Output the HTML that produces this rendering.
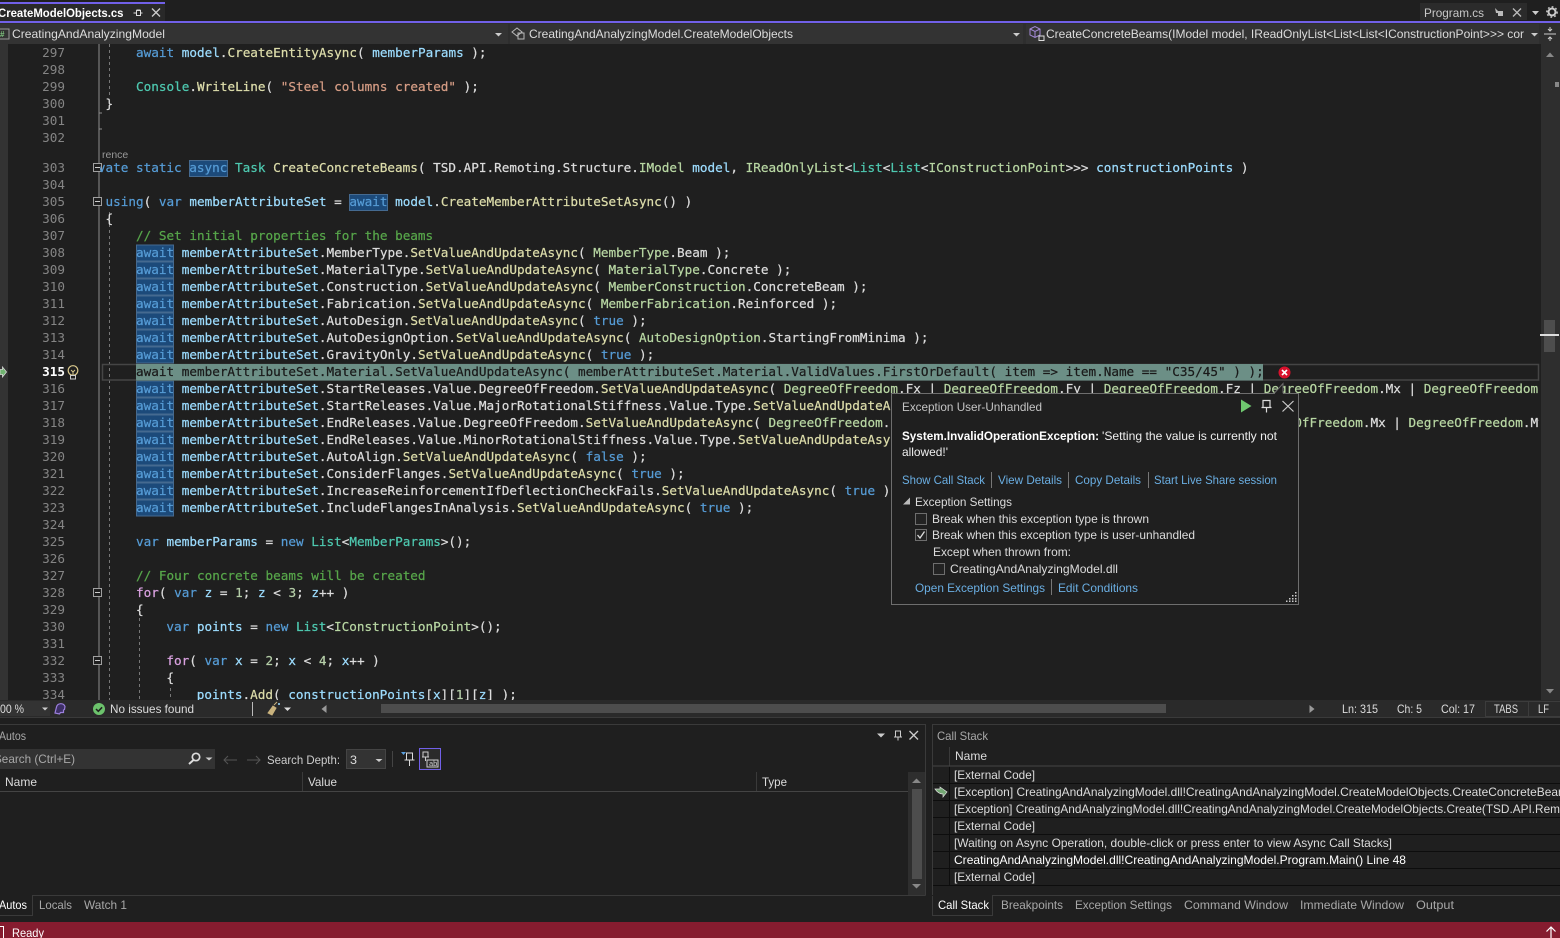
<!DOCTYPE html>
<html><head><meta charset="utf-8"><title>CreateModelObjects.cs</title>
<style>
html,body{margin:0;padding:0;background:#1f1f1f;width:1560px;height:938px;overflow:hidden}
svg{display:block;position:absolute;left:0;top:0}
text{white-space:pre}
.u{font:12px "Liberation Sans",sans-serif;fill:#dcdcdc}
.d{fill:#a8a8a8}.a{fill:#6aaee2}
.c{font:12.66px "DejaVu Sans Mono","Liberation Mono",monospace;fill:#dcdcdc;stroke:#dcdcdc;stroke-width:.22px}
.ln{font:12.66px "DejaVu Sans Mono","Liberation Mono",monospace;fill:#858585;text-anchor:end}
.k{fill:#569cd6;stroke:#569cd6}.v{fill:#9cdcfe;stroke:#9cdcfe}.m{fill:#dcdcaa;stroke:#dcdcaa}.t{fill:#4ec9b0;stroke:#4ec9b0}.i{fill:#b8d7a3;stroke:#b8d7a3}.s{fill:#d69d85;stroke:#d69d85}.n{fill:#b5cea8;stroke:#b5cea8}.g{fill:#57a64a;stroke:#57a64a}.f{fill:#d8a0df;stroke:#d8a0df}
</style></head><body>
<svg width="1560" height="938" viewBox="0 0 1560 938" xmlns="http://www.w3.org/2000/svg">
<defs>
<clipPath id="code"><rect x="100" y="44" width="1439" height="656"/></clipPath>
<clipPath id="cs"><rect x="950" y="766" width="610" height="120"/></clipPath>
</defs>
<rect width="1560" height="938" fill="#1f1f1f"/>

<!-- top tabs -->
<rect x="0" y="2" width="165" height="19" fill="#292929"/>
<rect x="0" y="2" width="165" height="2" fill="#7160e8"/>
<rect x="0" y="21" width="1560" height="2" fill="#7160e8"/>
<text class="u" x="-2" y="17" textLength="125.500" lengthAdjust="spacingAndGlyphs" font-weight="700" style="font-weight:700;fill:#fff">CreateModelObjects.cs</text>
<path d="M133.500 13h3M136.500 10.500v5h4v-5zM140.500 13h2M136.500 10h4" stroke="#ddd" fill="none"/>
<path d="M152 8.500l8 8M160 8.500l-8 8" stroke="#ccc" stroke-width="1.300"/>
<rect x="1420" y="3" width="107" height="17" fill="#2b2b2b"/>
<text class="u" x="1424" y="17" textLength="60" lengthAdjust="spacingAndGlyphs" style="fill:#c8c8c8">Program.cs</text>
<path d="M1495 8l3 3h5v5h-5v-3h-2z" fill="#bbb"/>
<path d="M1513 8.500l8 8M1521 8.500l-8 8" stroke="#bbb" stroke-width="1.300"/>
<path d="M1532 11h7l-3.500 4z" fill="#ccc"/>
<circle cx="1552" cy="12" r="3.500" fill="none" stroke="#ccc" stroke-width="2"/>
<circle cx="1552" cy="12" r="5.200" fill="none" stroke="#ccc" stroke-width="1.300" stroke-dasharray="1.800 2.200"/>

<!-- nav bar -->
<rect x="0" y="23" width="1560" height="21" fill="#2e2e2e"/>
<rect x="0" y="24" width="508" height="20" fill="#333"/>
<rect x="510" y="24" width="513" height="20" fill="#333"/>
<rect x="1026" y="24" width="513" height="20" fill="#333"/>
<rect x="-3" y="29" width="12" height="10" fill="none" stroke="#9a9a9a"/>
<text x="0" y="37" style="font:bold 8px 'Liberation Sans',sans-serif;fill:#7fc77f">#</text>
<text class="u" x="12" y="38" textLength="153" lengthAdjust="spacingAndGlyphs">CreatingAndAnalyzingModel</text>
<path d="M495 33h7l-3.500 3.500z" fill="#ccc"/>
<path d="M512 32l5-4 5 4-5 4zM518 33h6v6h-6z" fill="none" stroke="#bbb"/>
<text class="u" x="529" y="38" textLength="264" lengthAdjust="spacingAndGlyphs">CreatingAndAnalyzingModel.CreateModelObjects</text>
<path d="M1013 33h7l-3.500 3.500z" fill="#ccc"/>
<path d="M1030 29l5-2.500 5 2.500v6l-5 2.500-5-2.500zM1030 29l5 2.500 5-2.500M1035 31.500v6" fill="none" stroke="#a58bd8"/>
<rect x="1039" y="36" width="5" height="4.500" fill="none" stroke="#ddd"/>
<text class="u" x="1046" y="38" textLength="478" lengthAdjust="spacingAndGlyphs">CreateConcreteBeams(IModel model, IReadOnlyList&lt;List&lt;List&lt;IConstructionPoint&gt;&gt;&gt; cor</text>
<path d="M1531 33h7l-3.500 3.500z" fill="#ccc"/>
<path d="M1544 34h12M1550 27v4M1548 29l2 2 2-2M1550 41v-4M1548 39l2-2 2 2" fill="none" stroke="#ccc"/>

<!-- editor margins -->
<rect x="0" y="44" width="8" height="656" fill="#333"/>
<rect x="1541" y="44" width="19" height="656" fill="#2e2e2e"/>
<path d="M1546 57l4-4.500 4 4.500z" fill="#888"/>
<path d="M1546 689l4 4.500 4-4.500z" fill="#888"/>
<rect x="1555" y="82" width="4" height="5" fill="#888"/>
<rect x="1544" y="320" width="11" height="32" fill="#4d4d4d"/>
<rect x="1540" y="334" width="19" height="2" fill="#ddd"/>

<!-- line numbers -->
<g class="nums">
<text class="ln" x="65" y="57">297</text><text class="ln" x="65" y="74">298</text><text class="ln" x="65" y="91">299</text><text class="ln" x="65" y="108">300</text><text class="ln" x="65" y="125">301</text><text class="ln" x="65" y="142">302</text>
<text class="ln" x="65" y="172">303</text><text class="ln" x="65" y="189">304</text><text class="ln" x="65" y="206">305</text><text class="ln" x="65" y="223">306</text><text class="ln" x="65" y="240">307</text><text class="ln" x="65" y="257">308</text><text class="ln" x="65" y="274">309</text><text class="ln" x="65" y="291">310</text><text class="ln" x="65" y="308">311</text><text class="ln" x="65" y="325">312</text><text class="ln" x="65" y="342">313</text><text class="ln" x="65" y="359">314</text>
<text class="ln" x="65" y="376" style="fill:#fff;font-weight:700">315</text>
<text class="ln" x="65" y="393">316</text><text class="ln" x="65" y="410">317</text><text class="ln" x="65" y="427">318</text><text class="ln" x="65" y="444">319</text><text class="ln" x="65" y="461">320</text><text class="ln" x="65" y="478">321</text><text class="ln" x="65" y="495">322</text><text class="ln" x="65" y="512">323</text><text class="ln" x="65" y="529">324</text><text class="ln" x="65" y="546">325</text><text class="ln" x="65" y="563">326</text><text class="ln" x="65" y="580">327</text><text class="ln" x="65" y="597">328</text><text class="ln" x="65" y="614">329</text><text class="ln" x="65" y="631">330</text><text class="ln" x="65" y="648">331</text><text class="ln" x="65" y="665">332</text><text class="ln" x="65" y="682">333</text><text class="ln" x="65" y="699">334</text>
</g>
<rect x="0" y="700" width="100" height="6" fill="#2b2b2b"/>
<!-- current line arrow & bulb -->
<path d="M0 369.500h2.500v-2.500l4 5-4 5v-2.500h-2.500z" fill="#6fb36f" stroke="#d8d8d8" stroke-width=".8"/>
<circle cx="73" cy="370.500" r="4.800" fill="none" stroke="#d9c88c" stroke-width="1.200"/>
<path d="M71 370l2 2 2-2M73 372v3" fill="none" stroke="#d9c88c"/>
<rect x="70.500" y="375.500" width="5" height="3.500" fill="none" stroke="#ccc"/>

<!-- outline & guides -->
<path d="M99 44v656" stroke="#8c8c8c"/>
<path d="M99 113h3M99 129h3" stroke="#8c8c8c"/>
<path d="M109.500 44v52M109.500 212v488" stroke="#777" stroke-dasharray="3 3"/>
<path d="M139.500 606v94" stroke="#777" stroke-dasharray="3 3"/>
<path d="M170.500 688v12" stroke="#777" stroke-dasharray="3 3"/>
<g fill="#1f1f1f" stroke="#a0a0a0">
<rect x="93.500" y="163.500" width="8" height="8"/><rect x="93.500" y="197.500" width="8" height="8"/><rect x="93.500" y="588.500" width="8" height="8"/><rect x="93.500" y="656.500" width="8" height="8"/>
</g>
<path d="M95 167.500h5M95 201.500h5M95 592.500h5M95 660.500h5" stroke="#ccc"/>

<!-- highlights -->
<rect x="189.500" y="160.500" width="38" height="16" fill="#1c4a7a" stroke="#456a90"/>
<rect x="349.500" y="194.500" width="38" height="16" fill="#1c4a7a" stroke="#456a90"/>
<g fill="#1c4a7a" stroke="#456a90">
<rect x="136.500" y="245" width="37" height="16"/><rect x="136.500" y="262" width="37" height="16"/><rect x="136.500" y="279" width="37" height="16"/><rect x="136.500" y="296" width="37" height="16"/><rect x="136.500" y="313" width="37" height="16"/><rect x="136.500" y="330" width="37" height="16"/><rect x="136.500" y="347" width="37" height="16"/>
<rect x="136.500" y="381" width="37" height="16"/><rect x="136.500" y="398" width="37" height="16"/><rect x="136.500" y="415" width="37" height="16"/><rect x="136.500" y="432" width="37" height="16"/><rect x="136.500" y="449" width="37" height="16"/><rect x="136.500" y="466" width="37" height="16"/><rect x="136.500" y="483" width="37" height="16"/><rect x="136.500" y="500" width="37" height="16"/>
</g>
<rect x="102.500" y="364.500" width="1436" height="15.500" fill="none" stroke="#454545" stroke-width="1.500"/>
<rect x="136" y="364" width="1127" height="16.500" fill="#6c8f86"/>

<!-- code -->
<g clip-path="url(#code)">
<text class="c k" x="136" y="57">await <tspan class="v">model</tspan><tspan class="c">.</tspan><tspan class="m">CreateEntityAsync</tspan><tspan class="c">( </tspan><tspan class="v">memberParams</tspan><tspan class="c"> );</tspan></text>
<text class="c" x="136" y="91"><tspan class="t">Console</tspan>.<tspan class="m">WriteLine</tspan>( <tspan class="s">"Steel columns created"</tspan> );</text>
<text class="c" x="105.500" y="108">}</text>
<text x="102" y="158" style="font:10.500px 'Liberation Sans',sans-serif;fill:#999">rence</text>
<text class="c" x="75" y="172"><tspan class="k">private static async </tspan><tspan class="t">Task </tspan><tspan class="m">CreateConcreteBeams</tspan>( TSD.API.Remoting.Structure.<tspan class="i">IModel</tspan> <tspan class="v">model</tspan>, <tspan class="i">IReadOnlyList</tspan>&lt;<tspan class="t">List</tspan>&lt;<tspan class="t">List</tspan>&lt;<tspan class="i">IConstructionPoint</tspan>&gt;&gt;&gt; <tspan class="v">constructionPoints</tspan> )</text>
<text class="c" x="105.500" y="206"><tspan class="k">using</tspan>( <tspan class="k">var </tspan><tspan class="v">memberAttributeSet</tspan> = <tspan class="k">await</tspan> <tspan class="v">model</tspan>.<tspan class="m">CreateMemberAttributeSetAsync</tspan>() )</text>
<text class="c" x="105.500" y="223">{</text>
<text class="c g" x="136" y="240">// Set initial properties for the beams</text>
<text class="c" x="136" y="257"><tspan class="k">await</tspan> <tspan class="v">memberAttributeSet</tspan>.MemberType.<tspan class="m">SetValueAndUpdateAsync</tspan>( <tspan class="i">MemberType</tspan>.Beam );</text>
<text class="c" x="136" y="274"><tspan class="k">await</tspan> <tspan class="v">memberAttributeSet</tspan>.MaterialType.<tspan class="m">SetValueAndUpdateAsync</tspan>( <tspan class="i">MaterialType</tspan>.Concrete );</text>
<text class="c" x="136" y="291"><tspan class="k">await</tspan> <tspan class="v">memberAttributeSet</tspan>.Construction.<tspan class="m">SetValueAndUpdateAsync</tspan>( <tspan class="i">MemberConstruction</tspan>.ConcreteBeam );</text>
<text class="c" x="136" y="308"><tspan class="k">await</tspan> <tspan class="v">memberAttributeSet</tspan>.Fabrication.<tspan class="m">SetValueAndUpdateAsync</tspan>( <tspan class="i">MemberFabrication</tspan>.Reinforced );</text>
<text class="c" x="136" y="325"><tspan class="k">await</tspan> <tspan class="v">memberAttributeSet</tspan>.AutoDesign.<tspan class="m">SetValueAndUpdateAsync</tspan>( <tspan class="k">true</tspan> );</text>
<text class="c" x="136" y="342"><tspan class="k">await</tspan> <tspan class="v">memberAttributeSet</tspan>.AutoDesignOption.<tspan class="m">SetValueAndUpdateAsync</tspan>( <tspan class="i">AutoDesignOption</tspan>.StartingFromMinima );</text>
<text class="c" x="136" y="359"><tspan class="k">await</tspan> <tspan class="v">memberAttributeSet</tspan>.GravityOnly.<tspan class="m">SetValueAndUpdateAsync</tspan>( <tspan class="k">true</tspan> );</text>
<text class="c" x="136" y="376" style="fill:#1a1a1a;stroke:#1a1a1a">await memberAttributeSet.Material.SetValueAndUpdateAsync( memberAttributeSet.Material.ValidValues.FirstOrDefault( item =&gt; item.Name == "C35/45" ) );</text>
<text class="c" x="136" y="393"><tspan class="k">await</tspan> <tspan class="v">memberAttributeSet</tspan>.StartReleases.Value.DegreeOfFreedom.<tspan class="m">SetValueAndUpdateAsync</tspan>( <tspan class="i">DegreeOfFreedom</tspan>.Fx | <tspan class="i">DegreeOfFreedom</tspan>.Fy | <tspan class="i">DegreeOfFreedom</tspan>.Fz | <tspan class="i">DegreeOfFreedom</tspan>.Mx | <tspan class="i">DegreeOfFreedom</tspan>.My</text>
<text class="c" x="136" y="410"><tspan class="k">await</tspan> <tspan class="v">memberAttributeSet</tspan>.StartReleases.Value.MajorRotationalStiffness.Value.Type.<tspan class="m">SetValueAndUpdateAsync</tspan>(</text>
<text class="c" x="136" y="427"><tspan class="k">await</tspan> <tspan class="v">memberAttributeSet</tspan>.EndReleases.Value.DegreeOfFreedom.<tspan class="m">SetValueAndUpdateAsync</tspan>( <tspan class="i">DegreeOfFreedom</tspan>.Fx | <tspan class="i">DegreeOfFreedom</tspan>.Fy | <tspan class="i">DegreeOfFreedom</tspan>.Fz | <tspan class="i">DegreeOfFreedom</tspan>.Mx | <tspan class="i">DegreeOfFreedom</tspan>.My</text>
<text class="c" x="136" y="444"><tspan class="k">await</tspan> <tspan class="v">memberAttributeSet</tspan>.EndReleases.Value.MinorRotationalStiffness.Value.Type.<tspan class="m">SetValueAndUpdateAsync</tspan>(</text>
<text class="c" x="136" y="461"><tspan class="k">await</tspan> <tspan class="v">memberAttributeSet</tspan>.AutoAlign.<tspan class="m">SetValueAndUpdateAsync</tspan>( <tspan class="k">false</tspan> );</text>
<text class="c" x="136" y="478"><tspan class="k">await</tspan> <tspan class="v">memberAttributeSet</tspan>.ConsiderFlanges.<tspan class="m">SetValueAndUpdateAsync</tspan>( <tspan class="k">true</tspan> );</text>
<text class="c" x="136" y="495"><tspan class="k">await</tspan> <tspan class="v">memberAttributeSet</tspan>.IncreaseReinforcementIfDeflectionCheckFails.<tspan class="m">SetValueAndUpdateAsync</tspan>( <tspan class="k">true</tspan> );</text>
<text class="c" x="136" y="512"><tspan class="k">await</tspan> <tspan class="v">memberAttributeSet</tspan>.IncludeFlangesInAnalysis.<tspan class="m">SetValueAndUpdateAsync</tspan>( <tspan class="k">true</tspan> );</text>
<text class="c" x="136" y="546"><tspan class="k">var </tspan><tspan class="v">memberParams</tspan> = <tspan class="k">new </tspan><tspan class="t">List</tspan>&lt;<tspan class="t">MemberParams</tspan>&gt;();</text>
<text class="c g" x="136" y="580">// Four concrete beams will be created</text>
<text class="c" x="136" y="597"><tspan class="f">for</tspan>( <tspan class="k">var </tspan><tspan class="v">z</tspan> = <tspan class="n">1</tspan>; <tspan class="v">z</tspan> &lt; <tspan class="n">3</tspan>; <tspan class="v">z</tspan>++ )</text>
<text class="c" x="136" y="614">{</text>
<text class="c" x="166.400" y="631"><tspan class="k">var </tspan><tspan class="v">points</tspan> = <tspan class="k">new </tspan><tspan class="t">List</tspan>&lt;<tspan class="i">IConstructionPoint</tspan>&gt;();</text>
<text class="c" x="166.400" y="665"><tspan class="f">for</tspan>( <tspan class="k">var </tspan><tspan class="v">x</tspan> = <tspan class="n">2</tspan>; <tspan class="v">x</tspan> &lt; <tspan class="n">4</tspan>; <tspan class="v">x</tspan>++ )</text>
<text class="c" x="166.400" y="682">{</text>
<text class="c" x="196.800" y="699"><tspan class="v">points</tspan>.<tspan class="m">Add</tspan>( <tspan class="v">constructionPoints</tspan>[<tspan class="v">x</tspan>][<tspan class="n">1</tspan>][<tspan class="v">z</tspan>] );</text>
</g>

<!-- error glyph -->
<circle cx="1284.500" cy="372.500" r="6" fill="#d9112c"/>
<path d="M1282 370l5 5M1287 370l-5 5" stroke="#fff" stroke-width="1.600"/>

<!-- exception popup -->
<rect x="891.500" y="393.500" width="407" height="211" fill="#1f1f1f" stroke="#6e6e6e"/>
<path d="M1274 393.500l9-10v10" fill="#1f1f1f" stroke="#6e6e6e"/>
<path d="M1275 394h8" stroke="#1f1f1f" stroke-width="1.500"/>
<text class="u" x="902" y="411" textLength="140" lengthAdjust="spacingAndGlyphs" style="fill:#c4c4c4">Exception User-Unhandled</text>
<path d="M1241 399.500l10.500 6.500-10.500 6.500z" fill="#6fc76f"/>
<path d="M1263 400.500h7v7h-7zM1261.500 407.500h10M1266.500 408v4.500" fill="none" stroke="#ddd" stroke-width="1.200"/>
<path d="M1282.500 401l11 10.500M1293.500 401l-11 10.500" stroke="#ccc" stroke-width="1.200"/>
<text class="u" x="902" y="440" textLength="197" lengthAdjust="spacingAndGlyphs" style="font-weight:700;fill:#fff">System.InvalidOperationException:</text>
<text class="u" x="1102" y="440" textLength="175" lengthAdjust="spacingAndGlyphs" style="fill:#eee">'Setting the value is currently not</text>
<text class="u" x="902" y="456" textLength="46" lengthAdjust="spacingAndGlyphs" style="fill:#eee">allowed!'</text>
<text class="u a" x="902" y="484" textLength="83" lengthAdjust="spacingAndGlyphs">Show Call Stack</text>
<text class="u a" x="998" y="484" textLength="64" lengthAdjust="spacingAndGlyphs">View Details</text>
<text class="u a" x="1075" y="484" textLength="66" lengthAdjust="spacingAndGlyphs">Copy Details</text>
<text class="u a" x="1154" y="484" textLength="123" lengthAdjust="spacingAndGlyphs">Start Live Share session</text>
<path d="M991.500 472v16M1068.500 472v16M1148.500 472v16M1051.500 579v16" stroke="#777"/>
<path d="M910 497.500v7h-7z" fill="#bbb"/>
<text class="u" x="915" y="506" textLength="97" lengthAdjust="spacingAndGlyphs">Exception Settings</text>
<rect x="915.500" y="513.500" width="11" height="11" fill="#232323" stroke="#6e6e6e"/>
<text class="u" x="932" y="523" textLength="217" lengthAdjust="spacingAndGlyphs">Break when this exception type is thrown</text>
<rect x="915.500" y="529.500" width="11" height="11" fill="#232323" stroke="#6e6e6e"/>
<path d="M917.500 535l2.500 3 4.500-6.500" fill="none" stroke="#ddd" stroke-width="1.300"/>
<text class="u" x="932" y="539" textLength="263" lengthAdjust="spacingAndGlyphs">Break when this exception type is user-unhandled</text>
<text class="u" x="933" y="556" textLength="138" lengthAdjust="spacingAndGlyphs">Except when thrown from:</text>
<rect x="933.500" y="563.500" width="11" height="11" fill="#232323" stroke="#6e6e6e"/>
<text class="u" x="950" y="573" textLength="168" lengthAdjust="spacingAndGlyphs">CreatingAndAnalyzingModel.dll</text>
<text class="u a" x="915" y="592" textLength="130" lengthAdjust="spacingAndGlyphs">Open Exception Settings</text>
<text class="u a" x="1058" y="592" textLength="80" lengthAdjust="spacingAndGlyphs">Edit Conditions</text>
<path d="M1295 592h1.500v1.500h-1.500zM1292 595h1.500v1.500h-1.500zM1295 595h1.500v1.500h-1.500zM1289 598h1.500v1.500h-1.500zM1292 598h1.500v1.500h-1.500zM1295 598h1.500v1.500h-1.500zM1286 600.500h1.500v1.500h-1.500zM1289 600.500h1.500v1.500h-1.500zM1292 600.500h1.500v1.500h-1.500zM1295 600.500h1.500v1.500h-1.500z" fill="#ccc"/>

<!-- editor status row -->
<rect x="0" y="700" width="1560" height="17" fill="#2a2a2a"/>
<rect x="0" y="701" width="50" height="15" fill="#333"/>
<text class="u" x="0" y="713" textLength="24" lengthAdjust="spacingAndGlyphs">00 %</text>
<path d="M42 707.500h6l-3 3z" fill="#ccc"/>
<path d="M55 713l1.500-6a4.500 4.500 0 0 1 8.500-.5l-.5 3-1 .5v2.500h-3l-1 1.500z" fill="#3d2f66" stroke="#9b7fdc" stroke-width="1.200"/>
<circle cx="99" cy="709" r="6" fill="#6cc36c"/>
<path d="M96 709l2.300 2.300 3.800-4" fill="none" stroke="#1f1f1f" stroke-width="1.500"/>
<text class="u" x="110" y="713" textLength="84" lengthAdjust="spacingAndGlyphs">No issues found</text>
<path d="M252.500 702v14" stroke="#bbb"/>
<path d="M268 713l5-7 3 2-4 7zM274 705l3-3" fill="#c9b27d" stroke="#c9b27d"/>
<circle cx="279" cy="704" r="1" fill="#9cdcfe"/>
<path d="M284 707.500h7l-3.500 3.500z" fill="#ddd"/>
<path d="M326.500 705v8l-5-4z" fill="#999"/>
<rect x="381" y="704" width="785" height="9" fill="#4d4d4d"/>
<path d="M1309.500 705v8l5-4z" fill="#999"/>
<text class="u" x="1342" y="713" textLength="36" lengthAdjust="spacingAndGlyphs">Ln: 315</text>
<text class="u" x="1397" y="713" textLength="25" lengthAdjust="spacingAndGlyphs">Ch: 5</text>
<text class="u" x="1441" y="713" textLength="34" lengthAdjust="spacingAndGlyphs">Col: 17</text>
<rect x="1485.500" y="701.500" width="43" height="15" fill="none" stroke="#3c3c3c"/>
<text class="u" x="1494" y="713" textLength="24" lengthAdjust="spacingAndGlyphs">TABS</text>
<rect x="1528.500" y="701.500" width="32" height="15" fill="none" stroke="#3c3c3c"/>
<text class="u" x="1538" y="713" textLength="11" lengthAdjust="spacingAndGlyphs">LF</text>
<path d="M0 717.500h1560" stroke="#3a3a3a"/>

<!-- Autos panel -->
<path d="M0 724.500h925.500v171M932.500 895V724.500h628" fill="none" stroke="#3a3a3a"/>
<text class="u d" x="-1" y="740" textLength="27" lengthAdjust="spacingAndGlyphs">Autos</text>
<path d="M877 733.500h8l-4 4z" fill="#ccc"/>
<path d="M895.500 731h5v6h-5zM894 737h8M898 737.500v3" fill="none" stroke="#ccc"/>
<path d="M909.500 731l8.500 8.500M918 731l-8.500 8.500" stroke="#ccc" stroke-width="1.300"/>
<rect x="0" y="749" width="215" height="20" fill="#333"/>
<text class="u d" x="-6" y="763" textLength="81" lengthAdjust="spacingAndGlyphs">Search (Ctrl+E)</text>
<circle cx="196" cy="757" r="3.700" fill="none" stroke="#ddd" stroke-width="1.700"/>
<path d="M193.500 760l-4.500 4" stroke="#ddd" stroke-width="2"/>
<path d="M205.500 757.500h7l-3.500 3z" fill="#ccc"/>
<path d="M237 760h-13M228 756l-4 4 4 4" fill="none" stroke="#555"/>
<path d="M247 760h13M256 756l4 4-4 4" fill="none" stroke="#555"/>
<text class="u" x="267" y="764" textLength="73" lengthAdjust="spacingAndGlyphs" style="fill:#ccc">Search Depth:</text>
<rect x="346.500" y="749.500" width="39" height="19" fill="#333" stroke="#444"/>
<text class="u" x="350" y="764" textLength="7" lengthAdjust="spacingAndGlyphs">3</text>
<path d="M375.500 759h7l-3.500 3z" fill="#ccc"/>
<path d="M392.500 751v16" stroke="#444"/>
<path d="M401 752h5l-2.500 3z" fill="#5aa0e0"/>
<path d="M406.500 753h6v7h-6zM404.500 760h10M409.500 760v6" fill="none" stroke="#ddd"/>
<rect x="419.500" y="748.500" width="21" height="21" fill="#2b2b2b" stroke="#7160e8"/>
<path d="M423 752h5v5h-5zM422 757h7M425.500 757v4M427 760h11v7h-11z" fill="none" stroke="#ccc"/>
<text x="429" y="766" style="font:7.500px 'Liberation Sans',sans-serif;fill:#ccc">ab</text>
<text class="u" x="5" y="786" textLength="32" lengthAdjust="spacingAndGlyphs">Name</text>
<text class="u" x="308" y="786" textLength="29" lengthAdjust="spacingAndGlyphs">Value</text>
<text class="u" x="762" y="786" textLength="25" lengthAdjust="spacingAndGlyphs">Type</text>
<path d="M302.500 772v20M756.500 772v20" stroke="#3a3a3a"/>
<path d="M0 791.500h908" stroke="#444"/>
<rect x="908" y="772" width="17" height="123" fill="#2e2e2e"/>
<rect x="912" y="789" width="10" height="90" fill="#4d4d4d"/>
<path d="M912 783l4.500-4.500 4.500 4.500z" fill="#888"/>
<path d="M912 884l4.500 4.500 4.500-4.500z" fill="#888"/>
<path d="M0 915.500h32.500V895.500h893" fill="none" stroke="#3a3a3a"/>
<text class="u" x="-1" y="909" textLength="28" lengthAdjust="spacingAndGlyphs" style="fill:#fff">Autos</text>
<text class="u d" x="39" y="909" textLength="33" lengthAdjust="spacingAndGlyphs">Locals</text>
<text class="u d" x="84" y="909" textLength="43" lengthAdjust="spacingAndGlyphs">Watch 1</text>

<!-- Call stack panel -->
<text class="u d" x="937" y="740" textLength="51" lengthAdjust="spacingAndGlyphs">Call Stack</text>
<path d="M949.500 747v19" stroke="#3a3a3a"/>
<text class="u" x="955" y="760" textLength="32" lengthAdjust="spacingAndGlyphs">Name</text>
<path d="M933 766h627" stroke="#444"/>
<path d="M933 783.500h627M933 800.500h627M933 817.500h627M933 834.500h627M933 851.500h627M933 868.500h627M933 885.500h627M949.500 767v118" stroke="#0d0d0d"/>
<path d="M935 789h5v-2l7 5-4 5v-3c-3 0-6-2-8-5z" fill="#74a874" stroke="#ddd" stroke-width=".7"/>
<g clip-path="url(#cs)">
<text class="u" x="954" y="779" textLength="81" lengthAdjust="spacingAndGlyphs">[External Code]</text>
<text class="u" x="954" y="796" textLength="614" lengthAdjust="spacingAndGlyphs">[Exception] CreatingAndAnalyzingModel.dll!CreatingAndAnalyzingModel.CreateModelObjects.CreateConcreteBeam</text>
<text class="u" x="954" y="813" textLength="606" lengthAdjust="spacingAndGlyphs">[Exception] CreatingAndAnalyzingModel.dll!CreatingAndAnalyzingModel.CreateModelObjects.Create(TSD.API.Rem</text>
<text class="u" x="954" y="830" textLength="81" lengthAdjust="spacingAndGlyphs">[External Code]</text>
<text class="u" x="954" y="847" textLength="438" lengthAdjust="spacingAndGlyphs">[Waiting on Async Operation, double-click or press enter to view Async Call Stacks]</text>
<text class="u" x="954" y="864" textLength="452" lengthAdjust="spacingAndGlyphs" style="fill:#fff">CreatingAndAnalyzingModel.dll!CreatingAndAnalyzingModel.Program.Main() Line 48</text>
<text class="u" x="954" y="881" textLength="81" lengthAdjust="spacingAndGlyphs">[External Code]</text>
</g>
<path d="M932.500 896v19.500h60V895.500h567.500" fill="none" stroke="#3a3a3a"/>
<text class="u" x="938" y="909" textLength="51" lengthAdjust="spacingAndGlyphs" style="fill:#fff">Call Stack</text>
<text class="u d" x="1001" y="909" textLength="62" lengthAdjust="spacingAndGlyphs">Breakpoints</text>
<text class="u d" x="1075" y="909" textLength="97" lengthAdjust="spacingAndGlyphs">Exception Settings</text>
<text class="u d" x="1184" y="909" textLength="104" lengthAdjust="spacingAndGlyphs">Command Window</text>
<text class="u d" x="1300" y="909" textLength="104" lengthAdjust="spacingAndGlyphs">Immediate Window</text>
<text class="u d" x="1416" y="909" textLength="38" lengthAdjust="spacingAndGlyphs">Output</text>

<!-- status bar -->
<rect x="0" y="922" width="1560" height="16" fill="#861c2f"/>
<path d="M0 926.500h3.500V938" fill="none" stroke="#fff"/>
<text class="u" x="12" y="937" textLength="32" lengthAdjust="spacingAndGlyphs" style="fill:#fff">Ready</text>
<path d="M1551 938v-11M1546.500 931.500l4.500-4.500 4.500 4.500" fill="none" stroke="#fff" stroke-width="1.200"/>
</svg>
</body></html>
